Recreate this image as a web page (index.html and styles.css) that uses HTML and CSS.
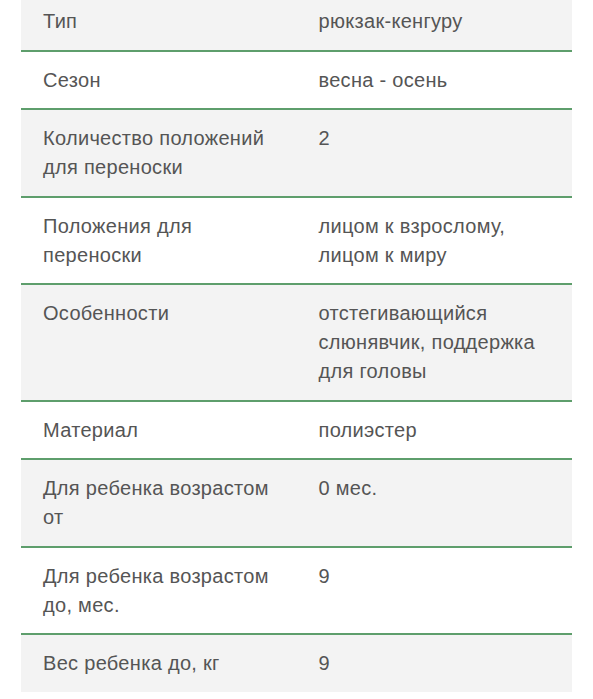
FILE: index.html
```html
<!DOCTYPE html>
<html lang="ru">
<head>
<meta charset="utf-8">
<link rel="stylesheet" href="styles.css">
</head>
<body>
<table class="specs">
<tbody>
<tr><td>Тип</td><td>рюкзак-кенгуру</td></tr>
<tr><td>Сезон</td><td>весна - осень</td></tr>
<tr><td>Количество положений для переноски</td><td>2</td></tr>
<tr><td>Положения для переноски</td><td>лицом к взрослому, лицом к миру</td></tr>
<tr><td>Особенности</td><td>отстегивающийся слюнявчик, поддержка для головы</td></tr>
<tr><td>Материал</td><td>полиэстер</td></tr>
<tr><td>Для ребенка возрастом от</td><td>0 мес.</td></tr>
<tr><td>Для ребенка возрастом до, мес.</td><td>9</td></tr>
<tr><td>Вес ребенка до, кг</td><td>9</td></tr>
</tbody>
</table>
</body>
</html>
```
FILE: styles.css
```css
html, body {
  margin: 0;
  padding: 0;
  background: #ffffff;
}
body {
  padding: 0 21px 0 21px;
  font-family: "Liberation Sans", Arial, sans-serif;
}
.specs {
  width: 551px;
  margin-top: -7px;
  border-collapse: collapse;
  table-layout: fixed;
  color: #555555;
  font-size: 20px;
  letter-spacing: 0.3px;
  line-height: 29px;
}
.specs td {
  width: 50%;
  padding: 14px 22px 13.5px;
  vertical-align: top;
}
.specs tr {
  border-bottom: 2px solid #5e9e6c;
}
.specs tr:last-child {
  border-bottom: none;
}
.specs tr:nth-child(odd) {
  background: #f3f3f3;
}
```
